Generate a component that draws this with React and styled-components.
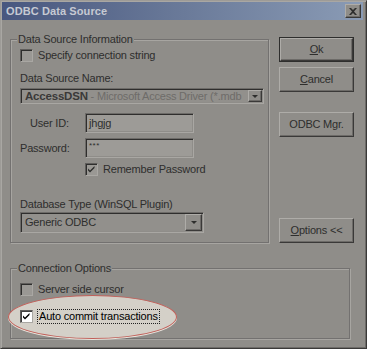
import React from 'react';
import styled, { createGlobalStyle } from 'styled-components';

const GlobalStyle = createGlobalStyle`
  html, body {
    margin: 0;
    padding: 0;
    background: #8e8c88;
  }
  body {
    font-family: "Liberation Sans", Arial, sans-serif;
    font-size: 11px;
    letter-spacing: -0.2px;
    color: #2e2e2d;
  }
`;

const Window = styled.div`
  width: 367px;
  height: 349px;
  box-sizing: border-box;
  background: #8f8d89;
  border-top: 1px solid #9d9b97;
  border-left: 1px solid #9d9b97;
  border-right: 1px solid #3a3938;
  border-bottom: 1px solid #3a3938;
  box-shadow: inset 1px 1px 0 #a9a7a3, inset -1px -1px 0 #6d6b68;
  padding: 1px 3px 0 1px;
  display: flex;
  flex-direction: column;
`;

const TitleBar = styled.div`
  height: 18px;
  display: flex;
  align-items: center;
  justify-content: space-between;
  padding: 0 2px 0 4px;
  background: linear-gradient(to right, #48577f, #6a7a99 50%, #8a9bb5);
  color: #c6cad3;
  font-weight: bold;
  font-size: 11px;
  letter-spacing: 0.1px;
`;

const CloseButton = styled.div`
  width: 16px;
  height: 14px;
  box-sizing: border-box;
  background: #8f8d89;
  border-top: 1px solid #aeaca8;
  border-left: 1px solid #aeaca8;
  border-right: 1px solid #3a3938;
  border-bottom: 1px solid #3a3938;
  box-shadow: inset -1px -1px 0 #6d6b68;
  display: flex;
  align-items: center;
  justify-content: center;
`;

const Body = styled.div`
  padding: 17px 0 0 8px;
  display: flex;
  flex-direction: column;
`;

const TopRow = styled.div`
  display: flex;
  align-items: flex-start;
  gap: 10px;
`;

const Group = styled.div`
  position: relative;
  box-sizing: border-box;
  width: ${(p) => p.$width}px;
  height: ${(p) => p.$height}px;
  margin-top: ${(p) => p.$top || 0}px;
  border: 1px solid #737170;
  box-shadow: 1px 1px 0 #a7a5a1, inset 1px 1px 0 #a7a5a1;
  padding: 0 0 0 9px;
  display: flex;
  flex-direction: column;
`;

const Caption = styled.span`
  position: absolute;
  top: -8px;
  left: 6px;
  padding: 0 1px;
  background: #8f8d89;
  line-height: 14px;
`;

const CheckRow = styled.div`
  position: relative;
  display: flex;
  align-items: center;
  gap: 5px;
  height: 13px;
  margin-top: ${(p) => p.$top || 0}px;
  margin-left: ${(p) => p.$left || 0}px;
`;

const Box = styled.div`
  width: 13px;
  height: 13px;
  box-sizing: border-box;
  flex: none;
  background: ${(p) => (p.$bright ? '#ffffff' : '#9a9894')};
  border-top: 1px solid #5f5d5b;
  border-left: 1px solid #5f5d5b;
  border-right: 1px solid #a9a7a3;
  border-bottom: 1px solid #a9a7a3;
  box-shadow: inset 1px 1px 0 ${(p) => (p.$bright ? '#404040' : '#2e2e2d')};
  display: flex;
  align-items: center;
  justify-content: center;
  position: relative;
  z-index: 1;
`;

const Label = styled.div`
  line-height: 13px;
  height: 13px;
  white-space: nowrap;
  margin-top: ${(p) => p.$top || 0}px;
  position: relative;
  z-index: 1;
`;

const FocusText = styled.span`
  position: relative;
  z-index: 1;
  color: #000;
  line-height: 13px;
  padding: 0 1px;
  outline: 1px dotted #222;
  outline-offset: 0;
`;

const Highlight = styled.div`
  position: absolute;
  left: -12px;
  top: -15px;
  width: 167px;
  height: 42px;
  border-radius: 50%;
  background: #d4d0c8;
  border: 1px solid #c0605a;
  box-shadow: 0 1px 0 #e8e4dc;
  z-index: 0;
`;

const Combo = styled.div`
  box-sizing: border-box;
  width: ${(p) => p.$width}px;
  height: ${(p) => p.$height}px;
  margin-top: ${(p) => p.$top || 0}px;
  background: #92908c;
  border-top: 1px solid #6d6b68;
  border-left: 1px solid #6d6b68;
  border-right: 1px solid #a9a7a3;
  border-bottom: 1px solid #a9a7a3;
  box-shadow: inset 1px 1px 0 #2f2e2d, inset -1px -1px 0 #8f8d89;
  display: flex;
  align-items: center;
  padding: 1px 1px 1px 4px;
  overflow: hidden;
`;

const ComboText = styled.div`
  flex: 1;
  white-space: nowrap;
  overflow: hidden;
  line-height: 13px;
`;

const Strong = styled.span`
  font-weight: bold;
  font-size: 11.5px;
  color: #3a3938;
`;

const Faint = styled.span`
  color: #6e6c69;
`;

const DropButton = styled.div`
  width: ${(p) => p.$width}px;
  align-self: stretch;
  box-sizing: border-box;
  flex: none;
  background: #8f8d89;
  border-top: 1px solid #aeaca8;
  border-left: 1px solid #aeaca8;
  border-right: 1px solid #3a3938;
  border-bottom: 1px solid #3a3938;
  box-shadow: inset -1px -1px 0 #6d6b68;
  display: flex;
  align-items: center;
  justify-content: center;
`;

const Arrow = styled.div`
  width: 0;
  height: 0;
  border-left: 3px solid transparent;
  border-right: 3px solid transparent;
  border-top: 3px solid #2e2e2d;
`;

const FieldRow = styled.div`
  display: flex;
  align-items: center;
  margin-top: ${(p) => p.$top}px;
`;

const FieldLabel = styled.div`
  width: ${(p) => 65 - (p.$indent || 0)}px;
  padding-left: ${(p) => p.$indent || 0}px;
  line-height: 13px;
`;

const Input = styled.div`
  box-sizing: border-box;
  width: 109px;
  height: 20px;
  background: #9d9b97;
  border-top: 1px solid #6d6b68;
  border-left: 1px solid #6d6b68;
  border-right: 1px solid #a9a7a3;
  border-bottom: 1px solid #a9a7a3;
  box-shadow: inset 1px 1px 0 #2f2e2d, inset -1px -1px 0 #8f8d89;
  padding: 2px 3px;
  font-size: ${(p) => (p.$small ? '8px' : '11px')};
  line-height: ${(p) => (p.$small ? '9px' : '14px')};
  letter-spacing: ${(p) => (p.$small ? '0.5px' : '-0.2px')};
`;

const ButtonColumn = styled.div`
  width: 75px;
  height: 206px;
  display: flex;
  flex-direction: column;
`;

const Button = styled.div`
  box-sizing: border-box;
  height: 25px;
  margin-top: ${(p) => (p.$auto ? 'auto' : `${p.$top || 0}px`)};
  background: #8f8d89;
  border: ${(p) => (p.$default ? '1px solid #2e2e2d' : 'none')};
  display: flex;
  flex-direction: column;
`;

const ButtonFace = styled.div`
  flex: 1;
  display: flex;
  align-items: center;
  justify-content: center;
  border-top: 1px solid #aeaca8;
  border-left: 1px solid #aeaca8;
  border-right: 1px solid #3a3938;
  border-bottom: 1px solid #3a3938;
  box-shadow: inset -1px -1px 0 #6d6b68;
  line-height: 13px;
  color: #2e2e2d;
`;

const Key = styled.span`
  text-decoration: underline;
  text-underline-offset: 1px;
`;

const Check = ({ color }) => (
  <svg width="9" height="9" viewBox="0 0 9 9">
    <path d="M1 3.5 L3 5.5 L7.5 1 L7.5 3 L3 7.5 L1 5.5 Z" fill={color} />
  </svg>
);

const PushButton = ({ children, ...rest }) => (
  <Button {...rest}>
    <ButtonFace>{children}</ButtonFace>
  </Button>
);

export default function App() {
  return (
    <>
      <GlobalStyle />
      <Window>
        <TitleBar>
          <span>ODBC Data Source</span>
          <CloseButton>
            <svg width="8" height="7" viewBox="0 0 8 7">
              <path d="M0 0h2l2 2 2-2h2L5 3.5 8 7H6L4 5 2 7H0l3-3.5z" fill="#2e2e2d" />
            </svg>
          </CloseButton>
        </TitleBar>
        <Body>
          <TopRow>
            <Group $width={259} $height={204} $top={2}>
              <Caption>Data Source Information</Caption>
              <CheckRow $top={9}>
                <Box />
                <Label>Specify connection string</Label>
              </CheckRow>
              <Label $top={10}>Data Source Name:</Label>
              <Combo $width={244} $height={16} $top={3}>
                <ComboText>
                  <Strong>AccessDSN</Strong>
                  <Faint> - Microsoft Access Driver (*.mdb</Faint>
                </ComboText>
                <DropButton $width={14}>
                  <Arrow />
                </DropButton>
              </Combo>
              <FieldRow $top={9}>
                <FieldLabel $indent={10}>User ID:</FieldLabel>
                <Input>jhgjg</Input>
              </FieldRow>
              <FieldRow $top={5}>
                <FieldLabel>Password:</FieldLabel>
                <Input $small>***</Input>
              </FieldRow>
              <CheckRow $top={5} $left={65}>
                <Box>
                  <Check color="#2e2e2d" />
                </Box>
                <Label>Remember Password</Label>
              </CheckRow>
              <Label $top={22}>Database Type (WinSQL Plugin)</Label>
              <Combo $width={184} $height={21} $top={1}>
                <ComboText>Generic ODBC</ComboText>
                <DropButton $width={17}>
                  <Arrow />
                </DropButton>
              </Combo>
            </Group>
            <ButtonColumn>
              <PushButton $default>
                <span>
                  <Key>O</Key>k
                </span>
              </PushButton>
              <PushButton $top={5}>
                <span>
                  <Key>C</Key>ancel
                </span>
              </PushButton>
              <PushButton $top={20}>ODBC Mgr.</PushButton>
              <PushButton $auto>
                <span>
                  <Key>O</Key>ptions &lt;&lt;
                </span>
              </PushButton>
            </ButtonColumn>
          </TopRow>
          <Group $width={340} $height={71} $top={25}>
            <Caption>Connection Options</Caption>
            <CheckRow $top={14}>
              <Box />
              <Label>Server side cursor</Label>
            </CheckRow>
            <CheckRow $top={14}>
              <Highlight />
              <Box $bright>
                <Check color="#000" />
              </Box>
              <FocusText>Auto commit transactions</FocusText>
            </CheckRow>
          </Group>
        </Body>
      </Window>
    </>
  );
}
